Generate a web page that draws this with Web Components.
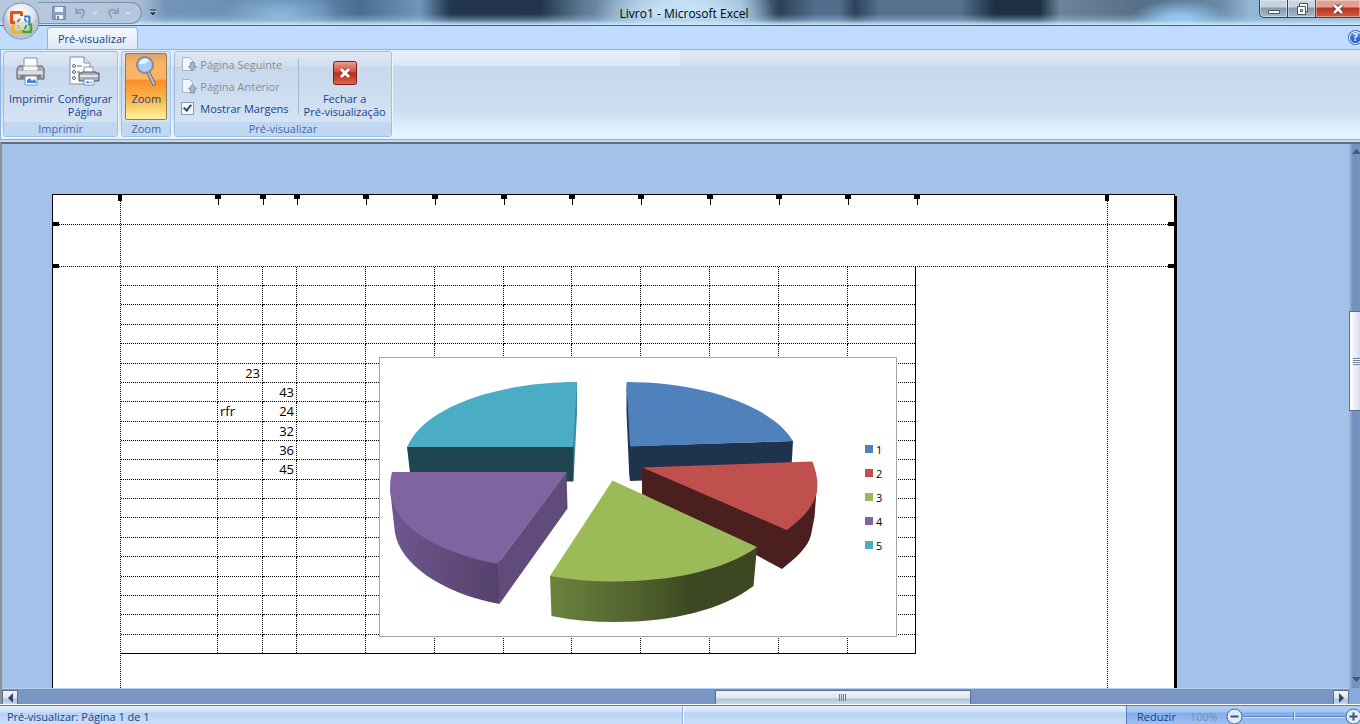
<!DOCTYPE html>
<html lang="pt">
<head>
<meta charset="utf-8">
<title>Livro1 - Microsoft Excel</title>
<style>
    html, body {
        height: 100%;
    }

    body {
        margin: 0;
        overflow: hidden;
        background: #bfdbff;
        color: #15428b;
        font: 11px/13px "Open Sans", "Noto Sans", sans-serif;
    }
</style>
</head>
<body>

<excel-window>
    <title-bar slot="title">Livro1 - Microsoft Excel</title-bar>
    <ribbon-tabs slot="tabs">Pré-visualizar</ribbon-tabs>

    <ribbon-group slot="ribbon" caption="Imprimir">
        <ribbon-button>
            <svg slot="icon" width="32" height="32" viewBox="0 0 32 32">
                <path d="M9 3h13v12H9z" fill="#fff" stroke="#8592a5"/>
                <path d="M4 11h4v3h15v-3h4l2 3v10H2V14z" fill="#b5b7bb" stroke="#54575d"/>
                <path d="M8 11h15v5H8z" fill="#f3f5f9" stroke="#9aa3b1"/>
                <path d="M3 16h25v3H3z" fill="#dcdde0"/>
                <path d="M5 20h21v3H5z" fill="#7b7e84"/>
                <path d="M10 21h12v9H10z" fill="#fff" stroke="#7a93b8"/>
                <path d="M12 28v-3l3-2 2 3 2-2 2 2v2z" fill="#3f86d6"/>
                <path d="M24 14h2v1h-2z" fill="#65b84c"/>
            </svg>
            Imprimir
        </ribbon-button>
        <ribbon-button>
            <svg slot="icon" width="32" height="32" viewBox="0 0 32 32">
                <path d="M1 2h14l6 6v21H1z" fill="#fbfcfe" stroke="#7f8da2"/>
                <path d="M15 2v6h6" fill="#dbe2ec" stroke="#7f8da2"/>
                <g fill="none" stroke="#596a83"><circle cx="5" cy="11" r="1.500"/><circle cx="5" cy="17" r="1.500"/><circle cx="5" cy="23" r="1.500"/><path d="M8 11h5M8 17h3"/></g>
                <path d="M15 12h9v7h-9z" fill="#fff" stroke="#8592a5"/>
                <path d="M10 18h3v-1h14v1h3v8H10z" fill="#aeb0b4" stroke="#54575d"/>
                <path d="M11 20h18v2H11z" fill="#e3e4e6"/>
                <path d="M15 24h10v6H15z" fill="#fff" stroke="#7a93b8"/>
                <path d="M17 28v-1l2-1 2 2 2-2v2z" fill="#3f86d6"/>
            </svg>
            Configurar<br>Página
        </ribbon-button>
    </ribbon-group>

    <ribbon-group slot="ribbon" caption="Zoom">
        <ribbon-button pressed>
            <svg slot="icon" width="32" height="32" viewBox="0 0 32 32">
                <path d="M18 17l6 12" stroke="#6b6f78" stroke-width="4" stroke-linecap="round"/>
                <path d="M18 17l6 12" stroke="#b9bec8" stroke-width="2" stroke-linecap="round"/>
                <circle cx="15" cy="10" r="8" fill="#a9cdf0" stroke="#7f8ca0" stroke-width="2"/>
                <path d="M9 9a6 6 0 0 1 10-4q-3 5-10 4z" fill="#e6f3ff"/>
            </svg>
            Zoom
        </ribbon-button>
    </ribbon-group>

    <ribbon-group slot="ribbon" caption="Pré-visualizar">
        <page-commands></page-commands>
        <ribbon-button>
            <svg slot="icon" width="32" height="32" viewBox="0 0 32 32">
                <defs><linearGradient id="red" x2="0" y2="1"><stop stop-color="#e9a097"/><stop offset=".45" stop-color="#d0503f"/><stop offset=".5" stop-color="#b82b17"/><stop offset="1" stop-color="#d96c56"/></linearGradient></defs>
                <rect x="4.500" y="6.500" width="23" height="23" rx="2" fill="url(#red)" stroke="#7c1d10"/>
                <path d="M12 14l8 8M20 14l-8 8" stroke="#8d2a1b" stroke-width="4"/>
                <path d="M12 14l8 8M20 14l-8 8" stroke="#fff" stroke-width="3"/>
            </svg>
            Fechar a<br>Pré-visualização
        </ribbon-button>
    </ribbon-group>

    <print-sheet slot="sheet"></print-sheet>
    <status-bar slot="status">Pré-visualizar: Página 1 de 1</status-bar>
</excel-window>

<script>
    class BaseComponent extends HTMLElement {
        constructor() {
            super();
            this.attachShadow({ mode: 'open' });
        }

        render(html) {
            this.shadowRoot.innerHTML = html;
        }
    }


    class ExcelWindow extends BaseComponent {
        connectedCallback() {
            this.render(`
                <style>
                    :host {
                        display: flex;
                        flex-direction: column;
                        height: 100vh;
                    }

                    .ribbon {
                        display: flex;
                        gap: 3px;
                        padding: 1px 3px 2px;
                        border-top: 1px solid #8db2e3;
                        border-bottom: 1px solid #8db0db;
                        background:
                            linear-gradient(#ffffff40, #ffffff40) left top / 50% 16px no-repeat,
                            linear-gradient(#dde8f5 0 2px, #d3e0f2 14px, #c6d8ed 17px, #cbdef2 60px, #e3f5fe 84px, #dcf3fe);
                        box-shadow: inset 1px 0 #8db2e3;
                    }

                    .workspace {
                        flex: 1;
                        min-height: 0;
                        display: grid;
                        grid-template: minmax(0, 1fr) 17px / minmax(0, 1fr) 11px;
                        margin-top: 2px;
                        border-top: 2px solid #6b6b6b;
                        border-left: 2px solid #8e9297;
                        background: #a3c2ea;
                    }

                    .view {
                        overflow: hidden;
                        padding: 50px;
                    }

                    .corner {
                        background: #86aadb;
                    }
                </style>
                <slot name="title"></slot>
                <slot name="tabs"></slot>
                <div class="ribbon"><slot name="ribbon"></slot></div>
                <div class="workspace">
                    <div class="view"><slot name="sheet"></slot></div>
                    <scroll-bar direction="vertical"></scroll-bar>
                    <scroll-bar direction="horizontal"></scroll-bar>
                    <div class="corner"></div>
                </div>
                <slot name="status"></slot>
            `);
        }
    }


    class TitleBar extends BaseComponent {
        connectedCallback() {
            this.render(`
                <style>
                    :host {
                        position: relative;
                        z-index: 1;
                        display: grid;
                        grid-template-columns: 1fr auto 1fr;
                        height: 25px;
                        border-bottom: 1px solid #3f6486;
                        color: #000;
                        font-size: 12px;
                        background:
                            linear-gradient(transparent 14px, #9cc8ea70 20px, #cfe8f8 25px),
                            radial-gradient(60px 20px at 280px 14px, #8db8dc, transparent),
                            radial-gradient(50px 20px at 1180px 20px, #92c8f0 20%, transparent),
                            radial-gradient(90px 40px at 684px 14px, #c4e0f4 30%, transparent),
                            linear-gradient(90deg, #b6c9df 0, #a8bcd6 140px, #7395b8 165px, #6a8eb0 250px, #6288ad 320px, #4a6c90 360px, #7097bb 420px, #22354f 450px, #22344d 540px, #5b7690 580px, #91b3d1 640px, #91b3d1 740px, #2a4058 780px, #526d8b 815px, #526d8b 840px, #2c435c 855px, #56718e 880px, #56718e 960px, #1e2f42 995px, #1e2f42 1040px, #6c8499 1060px, #566f88 1140px, #6a8aa8 1220px, #93b6d2 1250px, #a3c0dc 1360px);
                    }

                    .title {
                        align-self: center;
                        padding: 2px 0 0 8px;
                        line-height: 16px;
                    }
                </style>
                <quick-access></quick-access>
                <div class="title"><slot></slot></div>
                <window-buttons></window-buttons>
            `);
        }
    }


    class QuickAccess extends BaseComponent {
        connectedCallback() {
            this.render(`
                <style>
                    :host {
                        display: flex;
                        align-items: center;
                        padding-left: 38px;
                    }

                    .office {
                        position: absolute;
                        left: 2px;
                        top: 2px;
                        width: 38px;
                        height: 38px;
                    }

                    button {
                        padding: 0;
                        border: 0;
                        background: none;
                    }

                    svg {
                        display: block;
                    }

                    .tools {
                        display: flex;
                        align-items: center;
                        gap: 6px;
                        height: 20px;
                        padding: 0 9px 0 14px;
                        border: 1px solid #7e90a8;
                        border-left: 0;
                        border-radius: 0 11px 11px 0;
                        background: #b7c8ddcc;
                    }

                    .more {
                        margin-left: 7px;
                    }
                </style>
                <button class="office" aria-label="Botão do Office">
                    <svg width="38" height="38" viewBox="0 0 38 38">
                        <defs><radialGradient id="orb" cy=".3"><stop stop-color="#fff"/><stop offset=".7" stop-color="#dfe4ec"/><stop offset="1" stop-color="#b4bccb"/></radialGradient></defs>
                        <circle cx="19" cy="19" r="18" fill="url(#orb)" stroke="#7c8ca4"/>
                        <path d="M2 20h34a17 17 0 0 1-34 0z" fill="#c5ccd8" opacity=".5"/>
                        <g fill="none" stroke-linejoin="round">
                            <path d="M13 20.500H9.500v-10h10V14" stroke="#e2520e" stroke-width="3"/>
                            <path d="M13 23.500h-2v7h8.500V28" stroke="#f2b50c" stroke-width="2.500"/>
                            <path d="M26 22.500h3v7.500h-7.500V28" stroke="#4ea32a" stroke-width="2.500"/>
                            <path d="M22 14.500h5.500v5.500H26" stroke="#2f7fd0" stroke-width="2"/>
                            <path d="M16 20v-2.500h3.500" stroke="#e2520e" stroke-dasharray="2 1" stroke-width="2"/>
                            <path d="M22 17.500h2v2.500" stroke="#2f7fd0" stroke-dasharray="2 1" stroke-width="2"/>
                            <path d="M16 23v3h3" stroke="#f2b50c" stroke-dasharray="2 1" stroke-width="2"/>
                            <path d="M24 23v3h-3" stroke="#4ea32a" stroke-dasharray="2 1" stroke-width="2"/>
                        </g>
                    </svg>
                </button>
                <div class="tools">
                    <button aria-label="Guardar">
                        <svg width="14" height="14" viewBox="0 0 14 14"><path d="M.5 .5h13v13h-13z" fill="#8ba0bf" stroke="#7089ad"/><path d="M3 1h8v5H3zM4 9h7v4H4z" fill="#edf2f8"/><path d="M5 10h2v3H5z" fill="#6c83a5"/></svg>
                    </button>
                    <button aria-label="Anular">
                        <svg width="26" height="14" viewBox="0 0 26 14" fill="none"><path d="M4 2v5h5M4 6q7-5 8 0 0 3-3 6" stroke="#8da2c1" stroke-width="2"/><path d="M21 6l2 2 2-2" stroke="#d6e1ee" stroke-width="1.500"/></svg>
                    </button>
                    <button aria-label="Repetir">
                        <svg width="28" height="14" viewBox="0 0 28 14" fill="none"><path d="M14 2v5H9M14 6Q7 1 5 6q0 3 3 6" stroke="#8da2c1" stroke-width="2"/><path d="M22 6l2 2 2-2" stroke="#d6e1ee" stroke-width="1.500"/></svg>
                    </button>
                </div>
                <button class="more" aria-label="Personalizar">
                    <svg width="8" height="8" viewBox="0 0 8 8"><path d="M1 1h6" stroke="#1d355a"/><path d="M0 3h8L4 7z" fill="#1d355a" stroke="#fff" stroke-width=".5"/></svg>
                </button>
            `);
        }
    }


    class WindowButtons extends BaseComponent {
        connectedCallback() {
            this.render(`
                <style>
                    :host {
                        display: flex;
                        justify-content: flex-end;
                        align-items: flex-start;
                        overflow: hidden;
                    }

                    button {
                        display: grid;
                        place-items: center;
                        width: 28px;
                        height: 18px;
                        padding: 0;
                        border: 1px solid #33475c;
                        border-width: 0 0 1px 1px;
                        background: linear-gradient(#c6d3e0 7px, #8798ab 8px, #a5bbd1);
                        box-shadow: inset 0 0 0 1px #ffffff66;
                    }

                    .min {
                        border-radius: 0 0 0 5px;
                    }

                    .close {
                        width: 45px;
                        background: linear-gradient(#e0a193 7px, #b8331c 8px, #cf5d3f);
                    }
                </style>
                <button class="min" aria-label="Minimizar"><svg width="14" height="14"><path d="M1.500 8.500h11v3h-11z" fill="#fff" stroke="#4a5563"/></svg></button>
                <button aria-label="Restaurar"><svg width="14" height="14"><path d="M4.500 1.500h8v8h-2v3h-8v-8h2z" fill="#fff" stroke="#4a5563"/><path d="M4.500 4.500h6v6M5.500 7.500h2v2h-2z" fill="none" stroke="#4a5563"/></svg></button>
                <button class="close" aria-label="Fechar"><svg width="14" height="14" fill="none"><path d="M3 3l8 8M11 3l-8 8" stroke="#5b3336" stroke-width="4.500"/><path d="M3 3l8 8M11 3l-8 8" stroke="#fff" stroke-width="2.500"/></svg></button>
            `);
        }
    }


    class RibbonTabs extends BaseComponent {
        connectedCallback() {
            this.render(`
                <style>
                    :host {
                        display: flex;
                        align-items: flex-end;
                        justify-content: space-between;
                        height: 23px;
                        padding-left: 47px;
                        background: #bfdbff;
                        overflow: hidden;
                    }

                    .tab {
                        height: 22px;
                        padding: 0 10px;
                        border: 1px solid #8db2e3;
                        border-bottom: 0;
                        border-radius: 4px 4px 0 0;
                        background: linear-gradient(#f3f9ff, #dde8f5);
                        color: inherit;
                        font: inherit;
                    }

                    .help {
                        align-self: center;
                        margin-right: -3px;
                        padding: 0;
                        border: 0;
                        border-radius: 50%;
                        width: 15px;
                        height: 15px;
                        background: linear-gradient(#6aa0f0, #1243c0);
                        box-shadow: inset 0 0 0 1px #3e68b8, inset 0 0 0 2px #fff;
                        color: #fff;
                        font: bold 10px/15px "Open Sans", sans-serif;
                    }
                </style>
                <button class="tab" role="tab" aria-selected="true"><slot></slot></button>
                <button class="help" aria-label="Ajuda">?</button>
            `);
        }
    }


    class RibbonGroup extends BaseComponent {
        connectedCallback() {
            this.render(`
                <style>
                    :host {
                        display: flex;
                        flex-direction: column;
                        height: 84px;
                        border: 1px solid #9fbfe0;
                        border-radius: 3px;
                        background: linear-gradient(#dee8f5, #d1dff0 14px, #c7d8ed 15px, #d7e6f6);
                        box-shadow: 1px 1px #eef6fd;
                    }

                    .body {
                        flex: 1;
                        display: flex;
                        padding: 1px 3px;
                    }

                    .caption {
                        height: 14px;
                        background: #c2d8f0;
                        color: #3e6aaa;
                        text-align: center;
                    }
                </style>
                <div class="body"><slot></slot></div>
                <div class="caption">${this.getAttribute('caption')}</div>
            `);
        }
    }


    class RibbonButton extends BaseComponent {
        connectedCallback() {
            this.render(`
                <style>
                    :host {
                        display: flex;
                    }

                    button {
                        display: flex;
                        flex-direction: column;
                        align-items: center;
                        gap: 5px;
                        height: 67px;
                        min-width: 42px;
                        padding: 1px;
                        border: 1px solid transparent;
                        border-radius: 2px;
                        background: none;
                        color: inherit;
                        font: inherit;
                        white-space: nowrap;
                    }

                    :host([pressed]) button {
                        border-color: #8e7a55;
                        background: linear-gradient(#d9a468, #fbb162 8px, #fdb465 25px, #fb8d2b 26px, #fdb349 45px, #fff3a0);
                    }
                </style>
                <button aria-pressed="${this.hasAttribute('pressed')}">
                    <slot name="icon"></slot>
                    <span><slot></slot></span>
                </button>
            `);
        }
    }


    class PageCommands extends BaseComponent {
        #pageIcon(arrow) {
            return `
                <svg width="16" height="16" viewBox="0 0 16 16">
                    <path d="M1.500 1.500h7l3 3v10h-10z" fill="#f2f5f9" stroke="#a9b5c5"/>
                    <path d="${arrow}" fill="#a8b5c8" stroke="#8594aa"/>
                </svg>
            `;
        }

        connectedCallback() {
            this.render(`
                <style>
                    :host {
                        display: grid;
                        grid-template-rows: repeat(3, 22px);
                        padding: 0 10px 0 3px;
                        margin-right: 3px;
                        background: linear-gradient(#9ebad9, #9ebad9) right 5px / 1px 56px no-repeat;
                    }

                    button, label {
                        display: flex;
                        align-items: center;
                        gap: 3px;
                        padding: 0;
                        border: 0;
                        background: none;
                        color: inherit;
                        font: inherit;
                        white-space: nowrap;
                    }

                    button:disabled {
                        color: #8d8d8d;
                    }

                    input {
                        appearance: none;
                        display: grid;
                        place-items: center;
                        width: 13px;
                        height: 13px;
                        margin: 0 3px 0 0;
                        border: 1px solid #8e9bad;
                        background: #f4f6f9;
                    }

                    input:checked::after {
                        content: "";
                        width: 3px;
                        height: 6px;
                        margin-bottom: 2px;
                        border: solid #2f4a70;
                        border-width: 0 2px 2px 0;
                        rotate: 40deg;
                    }
                </style>
                <button disabled>${this.#pageIcon('M9.500 6.500h4v4h2l-4 4.500-4-4.500h2z')}Página Seguinte</button>
                <button disabled>${this.#pageIcon('M9.500 15h4v-4h2l-4-4.500-4 4.500h2z')}Página Anterior</button>
                <label><input type="checkbox" checked>Mostrar Margens</label>
            `);
        }
    }


    class PrintSheet extends BaseComponent {
        // column widths up to the last one, which takes what is left of the print area
        #columns = [97, 45, 34, 69, 69, 69, 68, 69, 69, 69, 69, 69];

        #values = {
            5: { 1: '23' },
            6: { 2: '43' },
            7: { 1: 'rfr', 2: '24' },
            8: { 2: '32' },
            9: { 2: '36' },
            10: { 2: '45' }
        };

        #rows() {
            let html = '';
            for (let row = 0; row < 20; row++) {
                const cells = this.#columns.map((width, column) => {
                    const value = this.#values[row]?.[column] ?? '';
                    return `<td${value === 'rfr' ? ' class="text"' : ''}>${value}</td>`;
                });
                html += `<tr>${cells.join('')}</tr>`;
            }
            return html;
        }

        #handles() {
            let x = 67;
            return this.#columns.map(width => {
                x += width;
                return `<path d="M${x - 2} 0h6v4h-6zM${x + 1} 4h1v6h-1z"/>`;
            }).join('');
        }

        connectedCallback() {
            this.render(`
                <style>
                    :host {
                        display: block;
                        position: relative;
                        box-sizing: border-box;
                        width: 1123px;
                        height: 794px;
                        padding: 72px 0 0 68px;
                        border: 1px solid #000;
                        background: #fff;
                        box-shadow: 2px 2px #000;
                        color: #000;
                    }

                    .margins {
                        position: absolute;
                        inset: 0;
                        width: 100%;
                        height: 100%;
                    }

                    .guides {
                        fill: none;
                        stroke: #000;
                        stroke-dasharray: 1 1;
                    }

                    .area {
                        position: relative;
                        width: 795px;
                    }

                    table {
                        table-layout: fixed;
                        width: 795px;
                        border-collapse: separate;
                        border-spacing: 0;
                        border-right: 1px solid #000;
                        border-bottom: 1px solid #000;
                        font-size: 13px;
                        line-height: 17px;
                    }

                    tr {
                        height: 19px;
                    }

                    tr:is(:nth-child(3), :nth-child(5), :nth-child(8), :nth-child(11), :nth-child(14), :nth-child(16), :nth-child(19)) {
                        height: 20px;
                    }

                    tr:last-child {
                        height: 18px;
                    }

                    td {
                        padding: 0 2px;
                        text-align: right;
                        border: 1px dotted #000;
                        border-width: 0 1px 1px 0;
                    }

                    td.text {
                        text-align: left;
                    }

                    td:last-child {
                        border-right: 0;
                    }

                    tr:last-child td {
                        border-bottom: 0;
                    }

                    pie-chart {
                        position: absolute;
                        left: 258px;
                        top: 90px;
                    }
                </style>
                <svg class="margins">
                    <path class="guides" d="M0 29.500H1122M0 71.500H1122M67.500 0V794M1054.500 0V794"/>
                    <path d="M65 0h4v6h-4zM1052 0h4v6h-4zM0 27h6v4H0zM0 69h6v4H0zM1115 27h6v4h-6zM1115 69h6v4h-6z"/>
                    ${this.#handles()}
                </svg>
                <div class="area">
                    <table aria-label="Folha">
                        <colgroup>${this.#columns.slice(0, -1).map(width => `<col style="width: ${width}px">`).join('')}<col></colgroup>
                        <tbody>${this.#rows()}</tbody>
                    </table>
                    <pie-chart></pie-chart>
                </div>
            `);
        }
    }


    class PieChart extends BaseComponent {
        #series = [
            ['1', '#4f81bd'],
            ['2', '#c0504d'],
            ['3', '#9bbb59'],
            ['4', '#8064a2'],
            ['5', '#4bacc6']
        ];

        connectedCallback() {
            this.render(`
                <style>
                    :host {
                        display: flex;
                        box-sizing: border-box;
                        width: 518px;
                        height: 280px;
                        border: 1px solid #a6a6a6;
                        background: #fff;
                        font-size: 11px;
                    }

                    svg {
                        flex: none;
                    }

                    ul {
                        align-self: center;
                        display: grid;
                        gap: 11px;
                        margin: 0 0 0 45px;
                        padding: 0;
                        list-style: none;
                    }

                    li {
                        display: flex;
                        align-items: center;
                        gap: 3px;
                        line-height: 13px;
                    }

                    i {
                        width: 8px;
                        height: 8px;
                    }
                </style>
                <svg width="440" height="278" viewBox="380 358 440 278" role="img" aria-label="Gráfico circular">
                    <defs>
                        <linearGradient id="purple"><stop stop-color="#70568f"/><stop offset="1" stop-color="#54416b"/></linearGradient>
                        <linearGradient id="green"><stop stop-color="#6b833d"/><stop offset=".4" stop-color="#52632f"/><stop offset=".68" stop-color="#3d4822"/></linearGradient>
                    </defs>
                    <path d="M575 382H577V413L573.500 481L572 447z" fill="#3b8ba1"/>
                    <path d="M407 447H573.500V481.500H411z" fill="#1f4650"/>
                    <path d="M407 447C424 407 497 382 577 382L573 447z" fill="#4bacc6"/>
                    <path d="M626.500 382V412L629.500 481L632 446z" fill="#1c3352"/>
                    <path d="M630 446L793 441L791 475L630 481z" fill="#1f344c"/>
                    <path d="M626.500 382C705 382 773 407 793 441L630 446.500z" fill="#4f81bd"/>
                    <path d="M642 467V494L782 569C797 557 808 547 811 535L814.500 517L817 484z" fill="#4b1f1e"/>
                    <path d="M642.500 467.500L812.500 461.500C822 487 820 506 786.500 530z" fill="#c0504d"/>
                    <path d="M390 488L392 507L395 533C400 563 440 593 499.500 604L502 560z" fill="url(#purple)"/>
                    <path d="M566.500 472L567.500 508.500L499.500 604L497.500 564z" fill="#604b7a"/>
                    <path d="M392 472H567L497.500 564C436 552 390 525 390 488Q390 479 392 472z" fill="#8064a2"/>
                    <path d="M550 576L551.500 616Q580 622 615 622C672 622 722 610 753.500 586L757 547z" fill="url(#green)"/>
                    <path d="M612.500 480.500L757 547C725 570 672 581.500 613 581.500Q580 581.500 550 576z" fill="#9bbb59"/>
                </svg>
                <ul>
                    ${this.#series.map(([name, color]) => `<li><i style="background: ${color}"></i>${name}</li>`).join('')}
                </ul>
            `);
        }
    }


    class ScrollBar extends BaseComponent {
        connectedCallback() {
            const vertical = this.getAttribute('direction') === 'vertical';
            this.render(vertical ? `
                <style>
                    :host {
                        display: grid;
                        grid-template: 17px 150fr 100px 260fr 17px / 17px;
                        overflow: hidden;
                        background: linear-gradient(90deg, #9dbce6, #7190bd 4px, #7b99c5 17px);
                    }

                    button {
                        padding: 0;
                        border: 0;
                        background: none;
                    }

                    .thumb {
                        grid-row: 3;
                        border: 1px solid #5b6f94;
                        background:
                            repeating-linear-gradient(#6f7f99 0 1px, #fff 1px 2px) 3px center / 9px 7px no-repeat,
                            linear-gradient(90deg, #fff, #dfe6f0 8px, #b5c3d9);
                    }

                    .down {
                        grid-row: 5;
                    }
                </style>
                <button aria-label="Para cima"><svg width="17" height="16"><path d="M3 10h9L7.500 5z" fill="#41587f"/></svg></button>
                <button class="thumb" aria-label="Posição vertical"></button>
                <button class="down" aria-label="Para baixo"><svg width="17" height="16"><path d="M3 6h9l-4.500 5z" fill="#41587f"/></svg></button>
            ` : `
                <style>
                    :host {
                        display: grid;
                        grid-template: 15px / 16px 696fr 256px 362fr 16px;
                        padding-top: 1px;
                        border-top: 1px solid #b7d1f2;
                        box-sizing: border-box;
                        background: #7896c1;
                    }

                    button {
                        padding: 0;
                        border: 1px solid #5b6f94;
                        background: linear-gradient(#f0f3f8, #dfe6ef 7px, #b3c3d8 8px, #cbd7e6);
                        box-sizing: border-box;
                    }

                    svg {
                        display: block;
                        margin: auto;
                    }

                    .thumb {
                        grid-column: 3;
                    }

                    .right {
                        grid-column: 5;
                    }
                </style>
                <button aria-label="Para a esquerda"><svg width="9" height="10"><path d="M7 0v10L2 5z" fill="#33466a"/></svg></button>
                <button class="thumb" aria-label="Posição horizontal"><svg width="8" height="7"><path d="M.5 0v7M2.500 0v7M4.500 0v7M6.500 0v7" stroke="#6b7b93"/></svg></button>
                <button class="right" aria-label="Para a direita"><svg width="9" height="10"><path d="M2 0v10l5-5z" fill="#33466a"/></svg></button>
            `);
        }
    }


    class StatusBar extends BaseComponent {
        connectedCallback() {
            this.render(`
                <style>
                    :host {
                        display: flex;
                        height: 18px;
                        overflow: hidden;
                        border-top: 1px solid #567db1;
                        line-height: 22px;
                        color: #15428b;
                        background: linear-gradient(#e3f0ff, #cfe1f9 6px, #b8d2f5 7px, #cfe2fb 22px);
                        box-shadow: 0 -1px #fff;
                    }

                    .message {
                        flex: 1;
                        padding-left: 7px;
                    }

                    .middle {
                        flex: 0 0 444px;
                        box-sizing: border-box;
                        border-left: 1px solid #8fb0dd;
                        box-shadow: inset 1px 0 #fff;
                    }

                    .zoom {
                        flex: none;
                        box-sizing: border-box;
                        display: flex;
                        align-items: flex-start;
                        width: 236px;
                        height: 22px;
                        margin-right: -2px;
                        padding-left: 10px;
                        border-left: 1px solid #567db1;
                        background: linear-gradient(#b4d0f6, #a3c4f2 6px, #83ade8 7px, #a5c7f5);
                    }

                    .percent {
                        margin: 0 8px 0 14px;
                        color: #7d8ea8;
                    }

                    button {
                        margin: 2px 0;
                        padding: 0;
                        border: 0;
                        background: none;
                    }

                    svg {
                        display: block;
                    }

                    input {
                        appearance: none;
                        flex: 1;
                        min-width: 0;
                        height: 20px;
                        margin: 0;
                        background: linear-gradient(#5a7fb5 1px, #d8e8fc 1px) center 10px / 100% 2px no-repeat;
                    }

                    input::-webkit-slider-thumb {
                        appearance: none;
                        width: 2px;
                        height: 8px;
                        background: linear-gradient(90deg, #5a7fb5 1px, #d8e8fc 1px);
                    }
                </style>
                <div class="message"><slot></slot></div>
                <div class="middle"></div>
                <div class="zoom">
                    <span>Reduzir</span>
                    <span class="percent">100%</span>
                    <button aria-label="Menos zoom"><svg width="17" height="17"><circle cx="8.500" cy="8.500" r="7.500" fill="#dfeafa" stroke="#45628f"/><path d="M4.500 8.500h8" stroke="#3a5179" stroke-width="2"/></svg></button>
                    <input type="range" min="0" max="100" value="50" aria-label="Zoom">
                    <button aria-label="Mais zoom"><svg width="17" height="17"><circle cx="8.500" cy="8.500" r="7.500" fill="#dfeafa" stroke="#45628f"/><path d="M4.500 8.500h8M8.500 4.500v8" stroke="#3a5179" stroke-width="2"/></svg></button>
                </div>
            `);
        }
    }


    window.customElements.define('excel-window', ExcelWindow);
    window.customElements.define('title-bar', TitleBar);
    window.customElements.define('quick-access', QuickAccess);
    window.customElements.define('window-buttons', WindowButtons);
    window.customElements.define('ribbon-tabs', RibbonTabs);
    window.customElements.define('ribbon-group', RibbonGroup);
    window.customElements.define('ribbon-button', RibbonButton);
    window.customElements.define('page-commands', PageCommands);
    window.customElements.define('print-sheet', PrintSheet);
    window.customElements.define('pie-chart', PieChart);
    window.customElements.define('scroll-bar', ScrollBar);
    window.customElements.define('status-bar', StatusBar);
</script>
</body>
</html>
